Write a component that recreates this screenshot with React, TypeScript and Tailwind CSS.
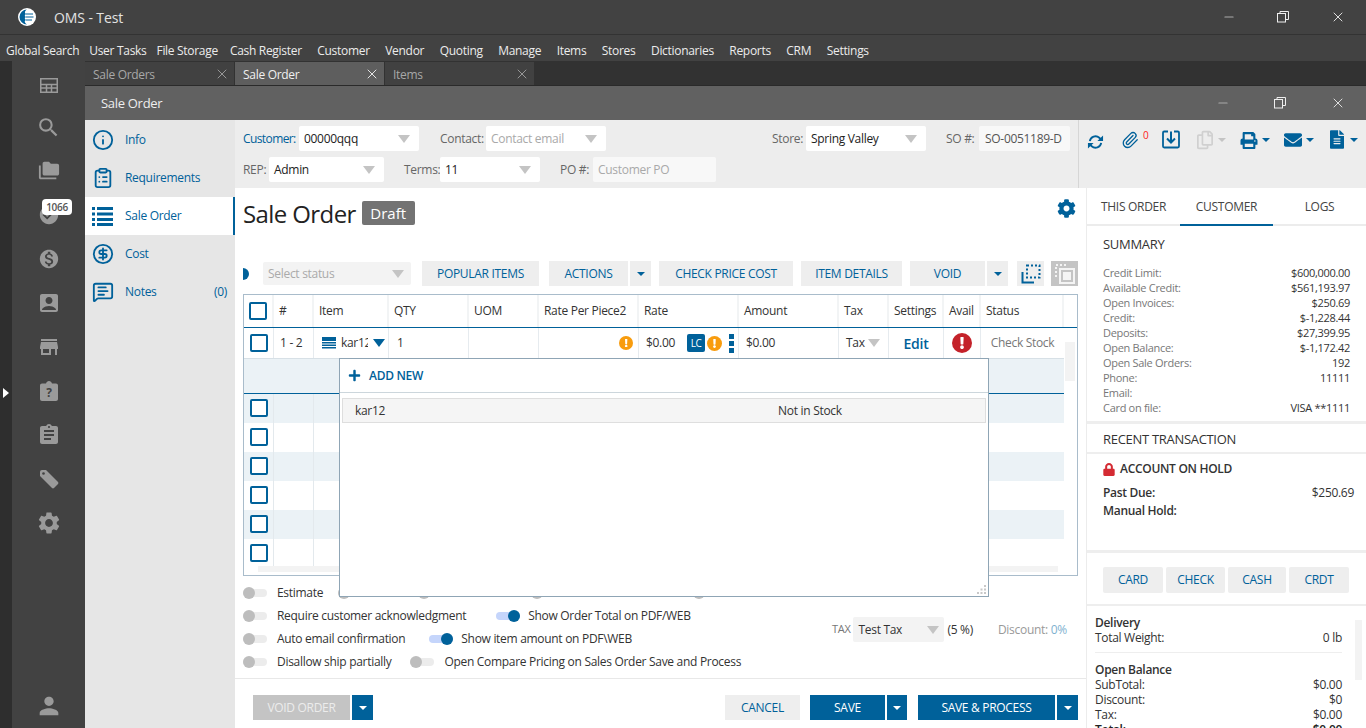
import { Info, ClipboardList, CircleDollarSign, MessageSquareText, X, Minus, Paperclip } from 'lucide-react';
import {
  MdSearch, MdFolderCopy, MdCheckCircle, MdMonetizationOn, MdAccountBox, MdStore,
  MdAssignment, MdSettings, MdPerson,
} from 'react-icons/md';
import { FaPrint, FaEnvelope, FaFileAlt, FaCog, FaLock, FaRegCopy, FaPlus, FaExclamation } from 'react-icons/fa';

const menuLeft = ['Global Search', 'User Tasks', 'File Storage'];
const menuRight = ['Cash Register', 'Customer', 'Vendor', 'Quoting', 'Manage', 'Items', 'Stores', 'Dictionaries', 'Reports', 'CRM', 'Settings'];

const summary = [
  ['Credit Limit:', '$600,000.00'],
  ['Available Credit:', '$561,193.97'],
  ['Open Invoices:', '$250.69'],
  ['Credit:', '$-1,228.44'],
  ['Deposits:', '$27,399.95'],
  ['Open Balance:', '$-1,172.42'],
  ['Open Sale Orders:', '192'],
  ['Phone:', '11111'],
  ['Email:', ''],
  ['Card on file:', 'VISA **1111'],
];

const headers = ['#', 'Item', 'QTY', 'UOM', 'Rate Per Piece2', 'Rate', 'Amount', 'Tax', 'Settings', 'Avail', 'Status'];

// same columns for header and rows
const gridCols = 'grid grid-cols-[30px_40px_75px_80px_70px_100px_100px_100px_50px_55px_37px_83px]';

function Caret({ color = 'border-t-[#c4c4c4]', size = 'big' }: { color?: string; size?: 'big' | 'small' }) {
  return (
    <span
      className={
        size === 'big'
          ? `block shrink-0 w-0 h-0 border-l-[6px] border-r-[6px] border-t-[8px] border-l-transparent border-r-transparent ${color}`
          : `block shrink-0 w-0 h-0 border-l-[4px] border-r-[4px] border-t-[4px] border-l-transparent border-r-transparent ${color}`
      }
    />
  );
}

function Select({ width, value, muted }: { width: string; value: string; muted?: boolean }) {
  return (
    <div className={`${width} h-[25px] bg-white rounded-[2px] flex items-center justify-between pl-[5px] pr-[9px]`}>
      <span className={muted ? 'text-[#a9a9a9]' : 'text-[#222]'}>{value}</span>
      <Caret />
    </div>
  );
}

function Btn({ width, label, primary, disabled }: { width: string; label: string; primary?: boolean; disabled?: boolean }) {
  const look = disabled
    ? 'bg-[#c4c4c4] text-[#ececec]'
    : primary
      ? 'bg-[#00619a] text-white'
      : 'bg-[#eeeeee] text-[#00619a]';
  return <div className={`${width} h-[25px] flex items-center justify-center ${look}`}>{label}</div>;
}

function CaretBtn({ width, primary }: { width: string; primary?: boolean }) {
  return (
    <div className={`${width} ml-[2px] h-[25px] flex items-center justify-center ${primary ? 'bg-[#00619a]' : 'bg-[#eeeeee]'}`}>
      <Caret size="small" color={primary ? 'border-t-white' : 'border-t-[#00619a]'} />
    </div>
  );
}

function Toggle({ on, className = '' }: { on?: boolean; className?: string }) {
  return (
    <span className={`relative inline-block w-[24px] h-[8px] rounded-full shrink-0 ${on ? 'bg-[#c5d5fb]' : 'bg-[#ececec]'} ${className}`}>
      <span className={`absolute top-[-2px] w-[12px] h-[12px] rounded-full ${on ? 'right-0 bg-[#00619a]' : 'left-0 bg-[#bdbdbd]'}`} />
    </span>
  );
}

function Checkbox() {
  return <span className="block w-[18px] h-[18px] rounded-[2px] border-2 border-[#00619a] bg-white" />;
}

function Dot({ size, color }: { size: string; color: string }) {
  return (
    <span className={`${size} ${color} rounded-full flex items-center justify-center shrink-0`}>
      <FaExclamation className="text-white w-[60%] h-[60%]" />
    </span>
  );
}

function ClipQuestion() {
  return (
    <svg viewBox="0 0 18 20" className="w-[18px] h-[20px]" fill="#9a9a9a">
      <path d="M2 2.500h4C6.400 1 7.600 0 9 0s2.600 1 3 2.500h4c1.100 0 2 .9 2 2V18c0 1.100-.9 2-2 2H2c-1.100 0-2-.9-2-2V4.500c0-1.100.9-2 2-2z" />
      <text x="9" y="16" textAnchor="middle" fontSize="12" fontWeight="700" fill="#424242">?</text>
    </svg>
  );
}

function TagIcon() {
  return (
    <svg viewBox="0 0 20 20" className="w-[20px] h-[20px]" fill="#9a9a9a">
      <path d="M1 3a2 2 0 0 1 2-2h4l12 12a1.500 1.500 0 0 1 0 2l-4 4a1.500 1.500 0 0 1-2 0L1 7z" />
      <circle cx="4.500" cy="4.500" r="1.300" fill="#424242" />
    </svg>
  );
}

function SideIcons() {
  const cls = 'w-[22px] h-[22px] text-[#9a9a9a]';
  const big = 'w-[24px] h-[24px] text-[#9a9a9a]';
  return (
    <div className="w-[73px] bg-[#424242] flex flex-col items-center pt-[4px] relative">
      <div className="h-[40px] flex items-center">
        <svg viewBox="0 0 18 15" className="w-[18px] h-[15px]" fill="none" stroke="#9a9a9a" strokeWidth="1.500">
          <rect x=".75" y=".75" width="16.500" height="13.500" />
          <path d="M.75 6.500h16.500M.75 10h16.500M6.500 6.500v7.500M11.500 6.500v7.500" />
        </svg>
      </div>
      <div className="h-[44px] flex items-center"><MdSearch className="w-[25px] h-[25px] text-[#9a9a9a]" /></div>
      <div className="h-[44px] flex items-center"><MdFolderCopy className={cls} /></div>
      <div className="h-[44px] flex items-center"><MdCheckCircle className={cls} /></div>
      <div className="h-[44px] flex items-center"><MdMonetizationOn className={cls} /></div>
      <div className="h-[44px] flex items-center"><MdAccountBox className={big} /></div>
      <div className="h-[44px] flex items-center"><MdStore className={big} /></div>
      <div className="h-[44px] flex items-center"><ClipQuestion /></div>
      <div className="h-[44px] flex items-center"><MdAssignment className={big} /></div>
      <div className="h-[44px] flex items-center"><TagIcon /></div>
      <div className="h-[44px] flex items-center"><MdSettings className="w-[26px] h-[26px] text-[#9a9a9a]" /></div>
      <div className="mt-auto mb-[8px]"><MdPerson className="w-[28px] h-[28px] text-[#9a9a9a]" /></div>
      {/* badge over the tasks icon */}
      <div className="absolute left-[30px] top-[138px] w-[30px] h-[16px] bg-white rounded-[4px] text-[#555] text-[10px] font-semibold flex items-center justify-center">
        1066
      </div>
    </div>
  );
}

function Logo() {
  return (
    <svg viewBox="0 0 18 18" className="w-[18px] h-[18px]">
      <circle cx="9" cy="9" r="9" fill="#fff" />
      <path d="M9 1.500A7.500 7.500 0 0 0 9 16.500c-3-2-2.500-4-1-4.500-1.500-1-1.500-2-.5-3-1-1-1-2 .5-3-1.500-1-1.500-3 1-4.500z" fill="#00619a" />
      <path d="M8 6h7M7.500 9h8M8 12h6" stroke="#00619a" strokeWidth="1" />
    </svg>
  );
}

function SyncIcon() {
  return (
    <svg viewBox="0 0 18 16" className="w-[17px] h-[16px] mt-[4px] shrink-0" fill="none" stroke="#00619a" strokeWidth="2">
      <path d="M3 7a6 6 0 0 1 10-3.500l1.500 1.500" />
      <path d="M15 9a6 6 0 0 1-10 3.500L3.500 11" />
      <path d="M17 1v6h-6zM1 15V9h6z" fill="#00619a" stroke="none" />
    </svg>
  );
}

function ListIcon() {
  return (
    <svg viewBox="0 0 21 20" className="w-[21px] h-[20px]" fill="#00619a">
      <path d="M0 1h3v3H0zM5 1h16v3H5zM0 6.500h3v3H0zM5 6.500h16v3H5zM0 12h3v3H0zM5 12h16v3H5zM0 17h3v3H0zM5 17h16v3H5z" />
    </svg>
  );
}

function WindowButtons({ gapClass, right }: { gapClass: string; right: string }) {
  return (
    <div className={`ml-auto flex items-center ${gapClass} ${right}`}>
      <Minus className="w-[14px] h-[14px] text-[#aaa]" />
      <svg viewBox="0 0 12 12" className="w-[12px] h-[12px]" fill="none" stroke="#eee" strokeWidth="1">
        <rect x=".5" y="2.500" width="8" height="8.500" />
        <path d="M3 2.500V.5h8.500v8h-2.500" />
      </svg>
      <X className="w-[16px] h-[16px] text-[#ddd]" strokeWidth={1.500} />
    </div>
  );
}

function Tab({ label, active }: { label: string; active?: boolean }) {
  return (
    <div className={`w-[149px] h-[23px] mr-px flex items-center justify-between pl-[8px] pr-[4px] ${active ? 'bg-[#5e5e5e] text-[#f0f0f0]' : 'bg-[#414141] text-[#a8a8a8]'}`}>
      <span className="mt-[2px]">{label}</span>
      <X className={`w-[16px] h-[16px] ${active ? 'text-white' : 'text-[#a8a8a8]'}`} strokeWidth={1.250} />
    </div>
  );
}

function NavItem({ icon, label, active, count }: { icon: React.ReactNode; label: string; active?: boolean; count?: string }) {
  return (
    <div className={`h-[38px] flex items-center pl-[7px] pr-[8px] text-[#00619a] ${active ? 'bg-white border-r-2 border-[#00619a]' : ''}`}>
      <span className="w-[33px] flex">{icon}</span>
      <span>{label}</span>
      {count && <span className="ml-auto">{count}</span>}
    </div>
  );
}

function TableBlock() {
  const emptyRows = [true, false, true, false, true, false];
  return (
    <div className="mt-[8px] ml-[8px] w-[835px] h-[282px] border border-[#a9bccb] relative overflow-hidden">
      {/* header */}
      <div className={`${gridCols} h-[33px] border-b border-[#00619a]`}>
        <div className="flex items-center justify-center border-r-2 border-[#f2f4f5]"><Checkbox /></div>
        {headers.map((h) => (
          <div key={h} className="flex items-center pl-[5px] border-r-2 border-[#f2f4f5] text-[#333] whitespace-nowrap">{h}</div>
        ))}
      </div>
      {/* first row */}
      <div className={`${gridCols} h-[30px]`}>
        <div className="flex items-center justify-center border-r border-[#e6ebef]"><Checkbox /></div>
        <div className="flex items-center pl-[6px] border-r border-[#e6ebef] text-[#333]">1 - 2</div>
        <div className="flex items-center pl-[8px] border-r border-[#e6ebef] text-[#333]">
          <svg viewBox="0 0 14 12" className="w-[14px] h-[12px] mr-[5px] shrink-0" fill="#00619a">
            <path d="M0 0h14v4H0zM0 5h14v1.500H0zM0 7.500h14V9H0zM0 10h14v1.500H0z" />
          </svg>
          <span className="w-[27px] overflow-hidden">kar12</span>
          <span className="ml-[5px]"><Caret color="border-t-[#00619a]" /></span>
        </div>
        <div className="flex items-center pl-[8px] border-r border-[#e6ebef] text-[#333]">1</div>
        <div className="border-r border-[#e6ebef]" />
        <div className="flex items-center justify-end pr-[5px] border-r border-[#e6ebef]">
          <Dot size="w-[14px] h-[14px]" color="bg-[#f89c0e]" />
        </div>
        <div className="flex items-center pl-[7px] border-r border-[#e6ebef] text-[#333]">
          <span>$0.00</span>
          <span className="ml-[12px] w-[18px] h-[18px] rounded-[2px] bg-[#00619a] text-white text-[10px] flex items-center justify-center">LC</span>
          <span className="ml-[2px]"><Dot size="w-[15px] h-[15px]" color="bg-[#f89c0e]" /></span>
          <span className="ml-[7px] flex flex-col gap-[2px]">
            <span className="block w-[5px] h-[5px] bg-[#00619a]" />
            <span className="block w-[5px] h-[5px] bg-[#00619a]" />
            <span className="block w-[5px] h-[5px] bg-[#00619a]" />
          </span>
        </div>
        <div className="flex items-center pl-[7px] border-r border-[#e6ebef] text-[#333]">$0.00</div>
        <div className="flex items-center justify-between pl-[7px] pr-[8px] border-r border-[#e6ebef] text-[#333]">
          <span>Tax</span><Caret />
        </div>
        <div className="flex items-center justify-center border-r border-[#e6ebef] text-[#00619a] font-semibold text-[14px]">Edit</div>
        <div className="flex items-center justify-center border-r border-[#e6ebef]">
          <Dot size="w-[20px] h-[20px]" color="bg-[#c4222a]" />
        </div>
        <div className="flex items-center justify-center text-[#777]">Check Stock</div>
      </div>
      {/* blank expanded row */}
      <div className="w-[820px] h-[36px] bg-[#ebf2f6] border-b border-[#00619a] border-t border-t-[#d7e0e6]" />
      {emptyRows.map((shade, i) => (
        <div key={i} className={`${gridCols} h-[29px] w-[820px] ${shade ? 'bg-[#ebf2f6]' : 'bg-white'}`}>
          <div className="flex items-center justify-center pb-[2px] border-r border-[#e3e9ed]"><Checkbox /></div>
          <div className="border-r border-[#e3e9ed]" />
          <div className="border-r border-[#e3e9ed]" />
        </div>
      ))}
      {/* scroll bits */}
      <div className="absolute right-[2px] top-[47px] w-[10px] h-[39px] bg-[#f3f3f3]" />
      <div className="absolute left-[14px] bottom-[3px] w-[800px] h-[6px] bg-[#f3f3f3]" />
    </div>
  );
}

function OptionRow({ label, children }: { label: string; children?: React.ReactNode }) {
  return (
    <div className="h-[23px] flex items-center text-[#333] whitespace-nowrap">
      <Toggle />
      <span className="ml-[10px]">{label}</span>
      {children}
    </div>
  );
}

function Popup() {
  return (
    <div className="absolute left-[104px] top-[170px] w-[650px] h-[239px] bg-white border border-[#8fa5b5]">
      <div className="h-[34px] flex items-center pl-[8px] border-b border-[#ccd6dc] text-[#00619a] font-semibold">
        <FaPlus className="w-[13px] h-[13px] mr-[8px]" />
        ADD NEW
      </div>
      <div className="mx-[2px] mt-[5px] h-[25px] bg-[#f5f5f5] border border-[#dedede] flex items-center text-[#333]">
        <span className="ml-[12px]">kar12</span>
        <span className="ml-[393px]">Not in Stock</span>
      </div>
      <svg viewBox="0 0 10 10" className="absolute right-[1px] bottom-[1px] w-[10px] h-[10px]" fill="#c8c8c8">
        <path d="M7 0h2v2H7zM3.500 3.500h2v2h-2zM7 3.500h2v2H7zM0 7h2v2H0zM3.500 7h2v2h-2zM7 7h2v2H7z" />
      </svg>
    </div>
  );
}

function CenterColumn() {
  return (
    <div className="w-[851px] relative flex flex-col">
      <div className="h-[73px] flex items-start pl-[8px] pt-[10px] pr-[10px]">
        <span className="text-[24px] leading-[32px] text-[#222] tracking-[-0.6px]">Sale Order</span>
        <span className="ml-[6px] mt-[3px] w-[53px] h-[24px] bg-[#737373] rounded-[2px] text-white text-[15px] flex items-center justify-center tracking-normal">Draft</span>
        <FaCog className="ml-auto mt-[1px] w-[19px] h-[19px] text-[#00619a]" />
      </div>
      <div className="flex items-center h-[25px] relative overflow-hidden">
        <div className="w-[16px] h-[12px] ml-[8px] overflow-hidden absolute left-0">
          <span className="block w-[12px] h-[12px] rounded-full bg-[#00619a] -ml-[6px]" />
        </div>
        <div className="ml-[28px] w-[148px] h-[23px] bg-[#f3f3f3] rounded-[2px] flex items-center justify-between pl-[5px] pr-[7px] text-[#aaa]">
          <span>Select status</span><Caret />
        </div>
        <div className="ml-[11px]"><Btn width="w-[117px]" label="POPULAR ITEMS" /></div>
        <div className="ml-[10px]"><Btn width="w-[79px]" label="ACTIONS" /></div>
        <CaretBtn width="w-[21px]" />
        <div className="ml-[8px]"><Btn width="w-[134px]" label="CHECK PRICE COST" /></div>
        <div className="ml-[8px]"><Btn width="w-[101px]" label="ITEM DETAILS" /></div>
        <div className="ml-[8px]"><Btn width="w-[75px]" label="VOID" /></div>
        <CaretBtn width="w-[21px]" />
        <div className="ml-[9px] w-[27px] h-[25px] bg-[#eeeeee] flex items-center justify-center">
          <svg viewBox="0 0 20 20" className="w-[20px] h-[20px]" fill="none" stroke="#00619a">
            <path d="M1.500 8v10.500H13" strokeWidth="2" />
            <path d="M6 1.500h12.500v12H6z" strokeWidth="2" strokeDasharray="2 2" />
          </svg>
        </div>
        <div className="ml-[7px] w-[27px] h-[25px] bg-[#c4c4c4] flex items-center justify-center">
          <svg viewBox="0 0 20 20" className="w-[20px] h-[20px]" fill="none" stroke="#f4f4f4">
            <path d="M1 13V1h12" strokeWidth="2" strokeDasharray="2 2" />
            <rect x="5" y="5" width="14" height="14" strokeWidth="2" />
            <rect x="8" y="8" width="8" height="8" fill="#f4f4f4" stroke="none" />
          </svg>
        </div>
      </div>
      <TableBlock />
      <div className="flex mt-[5px] pl-[8px]">
        <div className="flex flex-col">
          <OptionRow label="Estimate">
            {/* mostly hidden by the popup */}
            <Toggle className="ml-[15px]" />
            <Toggle className="ml-[56px]" />
            <Toggle className="ml-[89px]" />
            <Toggle className="ml-[138px]" />
          </OptionRow>
          <OptionRow label="Require customer acknowledgment">
            <Toggle on className="ml-[30px]" />
            <span className="ml-[8px]">Show Order Total on PDF/WEB</span>
          </OptionRow>
          <OptionRow label="Auto email confirmation">
            <Toggle on className="ml-[24px]" />
            <span className="ml-[8px]">Show item amount on PDF\WEB</span>
          </OptionRow>
          <OptionRow label="Disallow ship partially">
            <Toggle className="ml-[19px]" />
            <span className="ml-[10px]">Open Compare Pricing on Sales Order Save and Process</span>
          </OptionRow>
        </div>
        <div className="absolute left-[597px] top-[429px] h-[25px] flex items-center text-[#777] whitespace-nowrap">
          <span className="text-[11px]">TAX</span>
          <div className="ml-[3px] w-[91px] h-[25px] bg-[#f3f3f3] rounded-[2px] flex items-center justify-between pl-[5px] pr-[5px] text-[#333]">
            <span>Test Tax</span><Caret />
          </div>
          <span className="ml-[3px] text-[#333]">(5 %)</span>
          <span className="ml-[25px] text-[#999]">Discount: <span className="text-[#7fb2d0]">0%</span></span>
        </div>
      </div>
      <div className="mt-[5px] border-t border-[#e8e8e8] flex items-start pt-[16px] pl-[18px] pr-[8px]">
        <Btn width="w-[97px]" label="VOID ORDER" disabled />
        <CaretBtn width="w-[21px]" primary />
        <div className="ml-auto"><Btn width="w-[75px]" label="CANCEL" /></div>
        <div className="ml-[10px]"><Btn width="w-[75px]" label="SAVE" primary /></div>
        <CaretBtn width="w-[20px]" primary />
        <div className="ml-[11px]"><Btn width="w-[137px]" label="SAVE & PROCESS" primary /></div>
        <CaretBtn width="w-[21px]" primary />
      </div>
      <Popup />
    </div>
  );
}

function Row({ k, v, cls = 'text-[#333]' }: { k: string; v: string; cls?: string }) {
  return (
    <div className={`flex justify-between h-[15px] leading-[15px] ${cls}`}>
      <span>{k}</span>
      <span>{v}</span>
    </div>
  );
}

function RightPanel() {
  return (
    <div className="w-[280px] border-l border-[#ececec] flex flex-col text-[#333] relative overflow-hidden">
      <div className="shrink-0 h-[38px] pt-[2px] flex border-b-2 border-[#ececec] text-[#444]">
        <div className="w-[93px] flex items-center justify-center">THIS ORDER</div>
        <div className="w-[93px] -mb-[2px] border-b-2 border-[#00619a] flex items-center justify-center">CUSTOMER</div>
        <div className="w-[93px] flex items-center justify-center">LOGS</div>
      </div>
      <div className="shrink-0 h-[198px] border-b-[3px] border-[#eeeeee] px-[16px] pt-[9px]">
        <div className="text-[13px] leading-[18px] font-medium text-[#333] mb-[12px]">SUMMARY</div>
        {summary.map(([k, v]) => (
          <div key={k} className="flex justify-between h-[15px] leading-[15px] text-[11px]">
            <span className="text-[#777]">{k}</span>
            <span className="text-[#333]">{v}</span>
          </div>
        ))}
      </div>
      <div className="shrink-0 h-[30px] pt-[4px] border-b-2 border-[#eeeeee] px-[16px] flex items-center text-[13px] font-medium">RECENT TRANSACTION</div>
      <div className="shrink-0 h-[99px] border-b-[3px] border-[#eeeeee] pl-[16px] pr-[12px] pt-[6px]">
        <div className="flex items-center font-semibold h-[18px]">
          <FaLock className="w-[12px] h-[13px] text-[#d42b33] mr-[5px]" />
          ACCOUNT ON HOLD
        </div>
        <div className="flex justify-between mt-[6px] h-[18px] items-center">
          <span className="font-semibold">Past Due:</span>
          <span>$250.69</span>
        </div>
        <div className="font-semibold h-[18px] leading-[18px]">Manual Hold:</div>
      </div>
      <div className="shrink-0 h-[53px] border-b-2 border-[#eeeeee] pl-[16px] pt-[14px] flex gap-[3px]">
        <div className="w-[60px] h-[26px] bg-[#eeeeee] rounded-[2px] text-[#00619a] flex items-center justify-center">CARD</div>
        <div className="w-[59px] h-[26px] bg-[#eeeeee] rounded-[2px] text-[#00619a] flex items-center justify-center">CHECK</div>
        <div className="w-[58px] h-[26px] bg-[#eeeeee] rounded-[2px] text-[#00619a] flex items-center justify-center">CASH</div>
        <div className="w-[60px] h-[26px] bg-[#eeeeee] rounded-[2px] text-[#00619a] flex items-center justify-center">CRDT</div>
      </div>
      <div className="shrink-0 pl-[8px] pr-[24px] pt-[9px]">
        <div className="font-semibold h-[15px] leading-[15px]">Delivery</div>
        <Row k="Total Weight:" v="0 lb" />
        <div className="border-t border-[#eeeeee] mt-[7px] mb-[9px]" />
        <div className="font-semibold h-[15px] leading-[15px]">Open Balance</div>
        <Row k="SubTotal:" v="$0.00" />
        <Row k="Discount:" v="$0" />
        <Row k="Tax:" v="$0.00" />
        <Row k="Total:" v="$0.00" cls="font-semibold text-[#222]" />
      </div>
      <div className="absolute right-[4px] top-[432px] w-[7px] h-[60px] bg-[#f3f3f3]" />
    </div>
  );
}

function HeaderForm() {
  return (
    <div className="h-[68px] flex bg-[#ededed]">
      <div className="w-[844px] pl-[8px] pt-[6px] flex flex-col gap-[6px] border-r border-[#d6d6d6] text-[#666]">
        <div className="flex items-center">
          <span className="text-[#00619a] w-[56px] tracking-[-0.6px]">Customer:</span>
          <Select width="w-[120px]" value="00000qqq" />
          <span className="ml-[21px] w-[46px]">Contact:</span>
          <Select width="w-[120px]" value="Contact email" muted />
          <span className="ml-[166px] w-[34px]">Store:</span>
          <Select width="w-[120px]" value="Spring Valley" />
          <span className="ml-[20px] w-[33px]">SO #:</span>
          <div className="w-[91px] h-[25px] bg-[#f8f8f8] rounded-[2px] flex items-center pl-[6px] font-medium text-[#555]">SO-0051189-D</div>
        </div>
        <div className="flex items-center">
          <span className="w-[26px]">REP:</span>
          <Select width="w-[115px]" value="Admin" />
          <span className="ml-[20px] w-[36px]">Terms:</span>
          <Select width="w-[100px]" value="11" />
          <span className="ml-[20px] w-[33px]">PO #:</span>
          <div className="w-[123px] h-[25px] bg-[#f8f8f8] rounded-[2px] flex items-center pl-[5px] text-[#a9a9a9]">Customer PO</div>
        </div>
      </div>
      <div className="flex-1 flex items-start pt-[10px] pl-[8px] text-[#00619a]">
        <SyncIcon />
        <Paperclip className="ml-[17px] w-[18px] h-[20px] shrink-0" strokeWidth={1.750} />
        <span className="ml-[4px] -mt-[2px] w-[6px] text-[10px] text-[#ff2020]">0</span>
        <svg viewBox="0 0 18 18" className="ml-[13px] w-[18px] h-[19px] shrink-0" fill="none" stroke="#00619a" strokeWidth="1.800">
          <path d="M6 1H2.200C1.500 1 1 1.500 1 2.200v13.600C1 16.500 1.500 17 2.200 17h13.600c.7 0 1.200-.5 1.200-1.200V2.200C17 1.500 16.500 1 15.800 1H12" />
          <path d="M9 1v10M5 8l4 4 4-4" strokeWidth="2" />
        </svg>
        <FaRegCopy className="ml-[17px] w-[16px] h-[20px] shrink-0 text-[#d0d0d0]" />
        <span className="ml-[5px] mt-[8px]"><Caret size="small" /></span>
        <FaPrint className="ml-[14px] mt-[2px] w-[18px] h-[17px] shrink-0" />
        <span className="ml-[4px] mt-[8px]"><Caret size="small" color="border-t-[#00619a]" /></span>
        <FaEnvelope className="ml-[14px] mt-[1px] w-[18px] h-[18px] shrink-0" />
        <span className="ml-[4px] mt-[8px]"><Caret size="small" color="border-t-[#00619a]" /></span>
        <FaFileAlt className="ml-[16px] w-[14px] h-[19px] shrink-0" />
        <span className="ml-[6px] mt-[8px]"><Caret size="small" color="border-t-[#00619a]" /></span>
      </div>
    </div>
  );
}

export default function App() {
  return (
    <div className="w-[1366px] h-[728px] overflow-hidden flex flex-col bg-[#424242] text-[12px] font-['Open_Sans',sans-serif] tracking-[-0.3px]">
      {/* title bar */}
      <div className="h-[35px] flex items-center border-b border-[#333] pl-[18px] text-[#e2e2e2]">
        <Logo />
        <span className="ml-[18px] text-[14px] tracking-[-0.1px]">OMS - Test</span>
        <WindowButtons gapClass="gap-[41px]" right="pr-[20px]" />
      </div>
      {/* main menu */}
      <div className="h-[26px] flex items-center pt-[5px] pl-[6px] text-[#ececec]">
        <div className="flex gap-[10px]">
          {menuLeft.map((m) => <span key={m}>{m}</span>)}
        </div>
        <div className="flex gap-[15.5px] ml-[12px]">
          {menuRight.map((m) => <span key={m}>{m}</span>)}
        </div>
      </div>
      <div className="flex-1 flex min-h-0">
        <div className="w-[12px] bg-[#2e2e2e] relative">
          <span className="absolute left-[3px] top-[327px] w-0 h-0 border-y-[5px] border-l-[6px] border-y-transparent border-l-white" />
        </div>
        <SideIcons />
        <div className="flex-1 flex flex-col min-w-0">
          {/* open tabs */}
          <div className="h-[25px] pt-px bg-[#323232] flex border-b border-[#2a2a2a]">
            <Tab label="Sale Orders" />
            <Tab label="Sale Order" active />
            <Tab label="Items" />
          </div>
          {/* sale order window */}
          <div className="h-[34px] bg-[#616161] flex items-center pl-[16px] text-[#eee] text-[13px]">
            <span className="mt-[2px]">Sale Order</span>
            <WindowButtons gapClass="gap-[44px]" right="pr-[20px]" />
          </div>
          <div className="flex-1 flex min-h-0 bg-white">
            <div className="w-[150px] bg-[#e6e6e6] pt-[1px]">
              <NavItem icon={<Info className="w-[22px] h-[22px]" strokeWidth={2} />} label="Info" />
              <NavItem icon={<ClipboardList className="w-[22px] h-[22px]" strokeWidth={2} />} label="Requirements" />
              <NavItem active icon={<ListIcon />} label="Sale Order" />
              <NavItem icon={<CircleDollarSign className="w-[22px] h-[22px]" strokeWidth={2} />} label="Cost" />
              <NavItem icon={<MessageSquareText className="w-[22px] h-[22px]" strokeWidth={2} />} label="Notes" count="(0)" />
            </div>
            <div className="flex-1 flex flex-col min-w-0">
              <HeaderForm />
              <div className="flex-1 flex min-h-0">
                <CenterColumn />
                <RightPanel />
              </div>
            </div>
          </div>
        </div>
      </div>
    </div>
  );
}
